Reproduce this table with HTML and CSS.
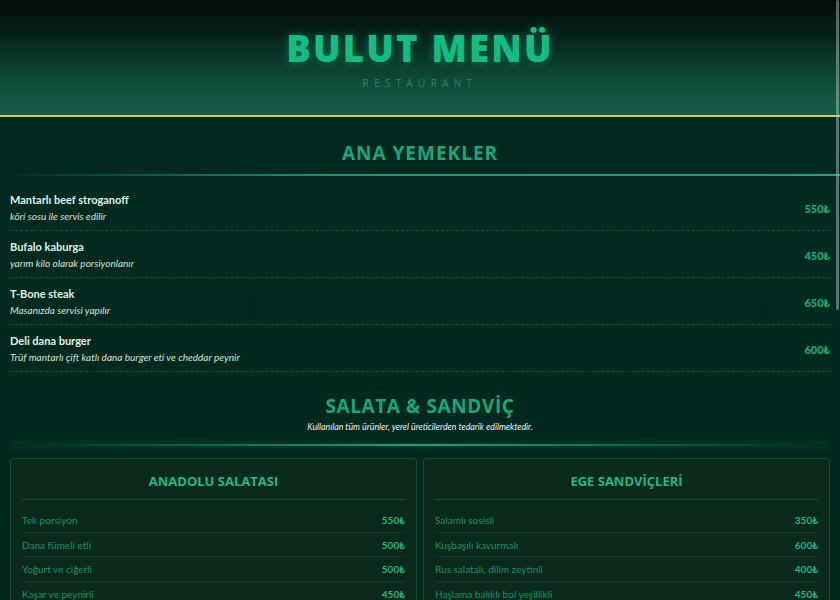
FILE: index.html
```html
<!DOCTYPE html>
<html lang="tr">
<head>
<meta charset="utf-8">
<title>Bulut Menü</title>
<link rel="stylesheet" href="styles.css">
</head>
<body>
<div class="scroll-thumb" aria-hidden="true"></div>
<header class="hero">
  <h1 class="hero-title">BULUT MENÜ</h1>
  <p class="hero-sub">RESTAURANT</p>
</header>
<main class="menu">
  <section class="section">
    <h2 class="section-title">ANA YEMEKLER</h2>
    <div class="section-line"></div>
    <ul class="dish-list">
      <li class="dish"><div class="dish-info"><div class="dish-name">Mantarlı beef stroganoff</div><div class="dish-desc">köri sosu ile servis edilir</div></div><span class="dish-price">550₺</span></li>
      <li class="dish"><div class="dish-info"><div class="dish-name">Bufalo kaburga</div><div class="dish-desc">yarım kilo olarak porsiyonlanır</div></div><span class="dish-price">450₺</span></li>
      <li class="dish"><div class="dish-info"><div class="dish-name">T-Bone steak</div><div class="dish-desc">Masanızda servisi yapılır</div></div><span class="dish-price">650₺</span></li>
      <li class="dish"><div class="dish-info"><div class="dish-name">Deli dana burger</div><div class="dish-desc">Trüf mantarlı çift katlı dana burger eti ve cheddar peynir</div></div><span class="dish-price">600₺</span></li>
    </ul>
  </section>
  <section class="section">
    <h2 class="section-title section-title-alt">SALATA &amp; SANDVİÇ</h2>
    <p class="section-note">Kullanılan tüm ürünler, yerel üreticilerden tedarik edilmektedir.</p>
    <div class="glow-line"></div>
    <div class="cards">
      <div class="card">
        <h3 class="card-title">ANADOLU SALATASI</h3>
        <ul class="card-list">
          <li class="card-item"><span>Tek porsiyon</span><span class="card-price">550₺</span></li>
          <li class="card-item"><span>Dana fümeli etli</span><span class="card-price">500₺</span></li>
          <li class="card-item"><span>Yoğurt ve ciğerli</span><span class="card-price">500₺</span></li>
          <li class="card-item"><span>Kaşar ve peynirli</span><span class="card-price">450₺</span></li>
          <li class="card-item"><span>Ton balıklı</span><span class="card-price">500₺</span></li>
          <li class="card-item"><span>Tavuklu sezar</span><span class="card-price">480₺</span></li>
        </ul>
      </div>
      <div class="card">
        <h3 class="card-title">EGE SANDVİÇLERİ</h3>
        <ul class="card-list">
          <li class="card-item"><span>Salamlı sosisli</span><span class="card-price">350₺</span></li>
          <li class="card-item"><span>Kuşbaşılı kavurmalı</span><span class="card-price">600₺</span></li>
          <li class="card-item"><span>Rus salatalı, dilim zeytinli</span><span class="card-price">400₺</span></li>
          <li class="card-item"><span>Haşlama balıklı bol yeşillikli</span><span class="card-price">450₺</span></li>
          <li class="card-item"><span>Füme hindili</span><span class="card-price">420₺</span></li>
          <li class="card-item"><span>Beyaz peynirli domatesli</span><span class="card-price">300₺</span></li>
        </ul>
      </div>
    </div>
  </section>
  <section class="section">
    <h2 class="section-title">TATLILAR</h2>
    <div class="section-line"></div>
    <ul class="dish-list">
      <li class="dish"><div class="dish-info"><div class="dish-name">Fıstıklı baklava</div><div class="dish-desc">Antep fıstığı ile hazırlanır</div></div><span class="dish-price">250₺</span></li>
      <li class="dish"><div class="dish-info"><div class="dish-name">Künefe</div><div class="dish-desc">sıcak servis edilir</div></div><span class="dish-price">220₺</span></li>
      <li class="dish"><div class="dish-info"><div class="dish-name">Sütlaç</div><div class="dish-desc">fırında pişirilir</div></div><span class="dish-price">150₺</span></li>
      <li class="dish"><div class="dish-info"><div class="dish-name">Kazandibi</div><div class="dish-desc">geleneksel tarif</div></div><span class="dish-price">160₺</span></li>
    </ul>
  </section>
  <footer class="footer">Bulut Menü © 2024</footer>
</main>
</body>
</html>
```

FILE: styles.css
```css
html {
  background: #032a20;
}
body {
  margin: 0;
  font-family: "Lato", "Open Sans", sans-serif;
  color: #d8ece2;
  background: linear-gradient(to bottom, #032a20 0%, #03291f 100%);
}
.scroll-thumb {
  position: fixed;
  top: 0;
  right: 1px;
  width: 3px;
  height: 310px;
  border-radius: 2px;
  background: rgba(190, 205, 200, 0.45);
  z-index: 10;
}
.hero {
  height: 115px;
  border-bottom: 2px solid #cdc862;
  background: linear-gradient(to bottom, #020c09 0%, #05221a 30%, #0f4d3b 72%, #175f4a 100%);
  display: flex;
  flex-direction: column;
  align-items: center;
}
.hero-title {
  margin: 27px 0 0;
  font-family: "Open Sans", sans-serif;
  font-weight: 800;
  font-size: 36.5px;
  line-height: 42px;
  letter-spacing: 2.2px;
  color: #16bd82;
  text-shadow: 0 0 8px rgba(22, 200, 130, 0.45);
}
.hero-sub {
  margin: 8px 0 0;
  font-family: "Open Sans", sans-serif;
  font-size: 10px;
  line-height: 12px;
  letter-spacing: 5.3px;
  color: #1d8d66;
}
.menu {
  padding: 0 10px;
}
.section-title {
  margin: 24px 0 0;
  text-align: center;
  font-family: "Open Sans", sans-serif;
  font-weight: 700;
  font-size: 19px;
  line-height: 24px;
  letter-spacing: 1px;
  color: #18a877;
}
.section-title-alt {
  margin-top: 22px;
  font-size: 19px;
  letter-spacing: 0.6px;
}
.section-line {
  height: 2px;
  margin: 9px -10px 0;
  background: linear-gradient(to right, rgba(26, 154, 112, 0) 0%, #1a9a70 40%, #1ea57a 100%);
}
.dish-list {
  list-style: none;
  margin: 8px 0 0;
  padding: 0;
}
.dish {
  display: flex;
  align-items: center;
  justify-content: space-between;
  padding: 8px 0 6px;
  border-bottom: 1px dashed #1c4a3a;
}
.dish-name {
  font-weight: 700;
  font-size: 11px;
  line-height: 16px;
  color: #dff0e8;
}
.dish-desc {
  font-style: italic;
  font-size: 10px;
  line-height: 16px;
  color: #cfe2d9;
}
.dish-price {
  font-weight: 900;
  font-size: 11px;
  color: #1aaa78;
}
.section-note {
  margin: 3px 0 0;
  text-align: center;
  font-style: italic;
  font-size: 8.8px;
  line-height: 12px;
  color: #e8f4ee;
}
.glow-line {
  height: 2px;
  margin: 11px 0 0;
  background: linear-gradient(to right, rgba(30, 170, 120, 0) 0%, #1fa578 50%, rgba(30, 170, 120, 0) 100%);
  box-shadow: 0 0 6px rgba(30, 180, 125, 0.35);
}
.cards {
  display: grid;
  grid-template-columns: 1fr 1fr;
  gap: 6px;
  margin-top: 12px;
}
.card {
  border: 1px solid #1d4634;
  border-radius: 4px;
  padding: 13px 11px 8px;
  background: linear-gradient(to bottom, #0a2a1c, #0b2a1d);
}
.card-title {
  margin: 0;
  padding-bottom: 8px;
  border-bottom: 1px solid #1d4a36;
  text-align: center;
  font-family: "Open Sans", sans-serif;
  font-weight: 700;
  font-size: 13px;
  line-height: 19px;
  color: #22b883;
}
.card-list {
  list-style: none;
  margin: 8px 0 0;
  padding: 0;
}
.card-item {
  display: flex;
  justify-content: space-between;
  padding: 6px 0 5px;
  border-bottom: 1px solid #143a29;
  font-size: 10px;
  line-height: 12.5px;
  color: #1b8f66;
}
.card-price {
  font-weight: 700;
  color: #22b582;
}
.footer {
  padding: 30px 0 60px;
  text-align: center;
  font-size: 10px;
  color: #1b8f66;
}
```
